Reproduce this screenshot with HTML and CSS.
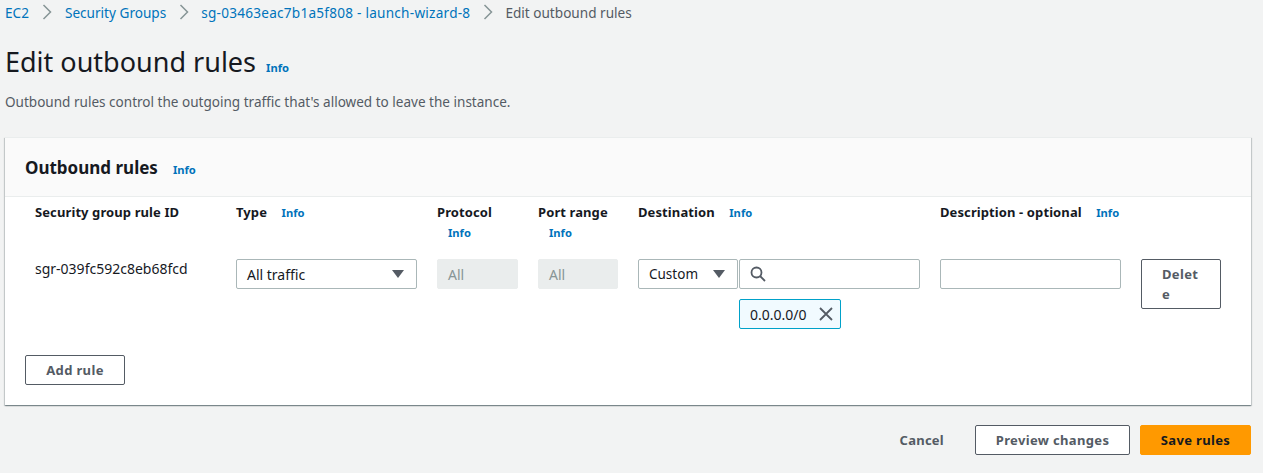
FILE: index.html
```html
<!DOCTYPE html>
<html lang="en">
<head>
    <meta charset="UTF-8">
    <title>Edit outbound rules</title>
    <link rel="stylesheet" href="styles.css">
</head>
<body>
    <nav class="crumbs">
        <a class="crumb-first" href="#">EC2</a>
        <svg class="crumb-sep" viewBox="0 0 10 16"><path d="M1.5 1l7 7-7 7"/></svg>
        <a href="#">Security Groups</a>
        <svg class="crumb-sep" viewBox="0 0 10 16"><path d="M1.5 1l7 7-7 7"/></svg>
        <a class="crumb-sg" href="#">sg-03463eac7b1a5f808 - launch-wizard-8</a>
        <svg class="crumb-sep" viewBox="0 0 10 16"><path d="M1.5 1l7 7-7 7"/></svg>
        <span>Edit outbound rules</span>
    </nav>

    <div class="page-title">
        <h1>Edit outbound rules</h1>
        <a class="info" href="#">Info</a>
    </div>
    <p class="page-desc">Outbound rules control the outgoing traffic that's allowed to leave the instance.</p>

    <section class="card">
        <div class="card-head">
            <h2>Outbound rules</h2>
            <a class="info" href="#">Info</a>
        </div>
        <div class="rules">
            <div class="label">Security group rule ID</div>
            <div class="label">Type <a class="info" href="#">Info</a></div>
            <div class="label">Protocol <a class="info" href="#">Info</a></div>
            <div class="label">Port range <a class="info" href="#">Info</a></div>
            <div class="label">Destination <a class="info" href="#">Info</a></div>
            <div class="label">Description - optional <a class="info" href="#">Info</a></div>
            <div></div>

            <div class="rule-id">sgr-039fc592c8eb68fcd</div>
            <div class="field select">All traffic <i class="caret"></i></div>
            <div class="field disabled">All</div>
            <div class="field disabled">All</div>
            <div class="dest">
                <div class="dest-row">
                    <div class="field select custom">Custom <i class="caret"></i></div>
                    <div class="field search">
                        <svg viewBox="0 0 16 16"><circle cx="6.5" cy="6.5" r="5"/><path d="M10 10l5 5"/></svg>
                    </div>
                </div>
                <div class="token">0.0.0.0/0
                    <svg viewBox="0 0 14 14"><path d="M1 1l12 12M13 1L1 13"/></svg>
                </div>
            </div>
            <div class="field"></div>
            <button class="btn delete">Delete</button>
        </div>
        <button class="btn add">Add rule</button>
    </section>

    <div class="actions">
        <a class="cancel" href="#">Cancel</a>
        <button class="btn preview">Preview changes</button>
        <button class="btn save">Save rules</button>
    </div>
</body>
</html>
```

FILE: styles.css
```css
* {
    box-sizing: border-box;
}

body {
    margin: 0;
    padding: 0 12px 0 5px;
    height: 473px;
    overflow: hidden;
    background-color: #f2f3f3;
    font-family: "Noto Sans", sans-serif;
    font-size: 14px;
    color: #16191f;
}

a {
    color: #0073bb;
    text-decoration: none;
}

.crumbs {
    display: flex;
    align-items: center;
    height: 24px;
    font-size: 13.6px;
    color: #545b64;
}

.crumb-first {
    margin-right: 1px;
}

.crumb-sg {
    letter-spacing: 0.24px;
}

.crumb-sep {
    width: 10px;
    height: 16px;
    margin: 0 12.5px;
    fill: none;
    stroke: #879596;
    stroke-width: 1.5;
}

.page-title {
    display: flex;
    align-items: baseline;
    margin-top: 18px;
    height: 40px;
}

h1 {
    margin: 0;
    font-size: 27px;
    font-weight: 400;
    line-height: 40px;
}

.info {
    margin-left: 10px;
    font-size: 11.2px;
    font-weight: 700;
    color: #0073bb;
}

.page-desc {
    margin: 11px 0 0;
    height: 18px;
    font-size: 13.55px;
    line-height: 18px;
    color: #545b64;
}

.card {
    margin-top: 26px;
    height: 268px;
    background: #fff;
    border-top: 1px solid #eaeded;
    box-shadow: 0 1px 1px 0 rgba(0, 28, 36, 0.3), 1px 1px 1px 0 rgba(0, 28, 36, 0.15), -1px 1px 1px 0 rgba(0, 28, 36, 0.15);
}

.card-head {
    display: flex;
    align-items: baseline;
    height: 59px;
    padding: 17px 20px 0;
    background: #fafafa;
    border-bottom: 1px solid #eaeded;
}

h2 {
    margin: 0;
    font-size: 17px;
    font-weight: 700;
    line-height: 26px;
}

.card-head .info {
    margin-left: 15px;
}

.rules {
    display: grid;
    grid-template-columns: 181px 181px 81px 80px 282px 181px 80px;
    grid-template-rows: 57px auto;
    column-gap: 20px;
    padding: 5px 0 0 30px;
    height: 158px;
}

.label {
    font-size: 13px;
    font-weight: 700;
    letter-spacing: 0.1px;
    line-height: 20px;
}

.label .info {
    margin-left: 11px;
    letter-spacing: 0;
    line-height: 20px;
}

.rule-id {
    line-height: 20px;
}

.field {
    height: 30px;
    padding: 0 10px;
    line-height: 29px;
    background: #fff;
    border: 1px solid #aab7b8;
    border-radius: 2px;
}

.select {
    display: flex;
    align-items: center;
    justify-content: space-between;
}

.caret {
    width: 0;
    height: 0;
    margin-right: 2px;
    border-left: 6px solid transparent;
    border-right: 6px solid transparent;
    border-top: 8px solid #545b64;
}

.disabled {
    background: #eaeded;
    border-color: #eaeded;
    color: #879596;
}

.dest-row {
    display: flex;
    gap: 1px;
}

.custom {
    width: 100px;
    font-size: 13.5px;
}

.search {
    display: flex;
    align-items: center;
    flex: 1;
}

.search svg {
    width: 16px;
    height: 16px;
    fill: none;
    stroke: #545b64;
    stroke-width: 1.8;
}

.token {
    display: flex;
    align-items: center;
    justify-content: space-between;
    width: 102px;
    height: 30px;
    margin: 10px 0 0 101px;
    padding: 0 7px 0 10px;
    background: #f1faff;
    border: 1px solid #00a1c9;
    border-radius: 2px;
}

.token svg {
    width: 14px;
    height: 14px;
    fill: none;
    stroke: #545b64;
    stroke-width: 1.8;
}

.btn {
    font-family: inherit;
    font-size: 13px;
    font-weight: 700;
    letter-spacing: 0.35px;
    color: #545b64;
    background: #fff;
    border: 1px solid #545b64;
    border-radius: 2px;
    height: 30px;
}

.delete {
    width: 80px;
    height: 50px;
    padding: 0 20px;
    line-height: 20px;
    text-align: left;
    word-break: break-all;
}

.add {
    width: 100px;
    margin-left: 20px;
}

.actions {
    display: flex;
    align-items: center;
    justify-content: flex-end;
    margin-top: 20px;
}

.cancel {
    margin-right: 31px;
    font-size: 13px;
    font-weight: 700;
    letter-spacing: 0.25px;
    color: #545b64;
}

.preview {
    width: 155px;
    margin-right: 10px;
}

.save {
    width: 111px;
    background: #ff9900;
    border-color: #ff9900;
    color: #16191f;
}
```
